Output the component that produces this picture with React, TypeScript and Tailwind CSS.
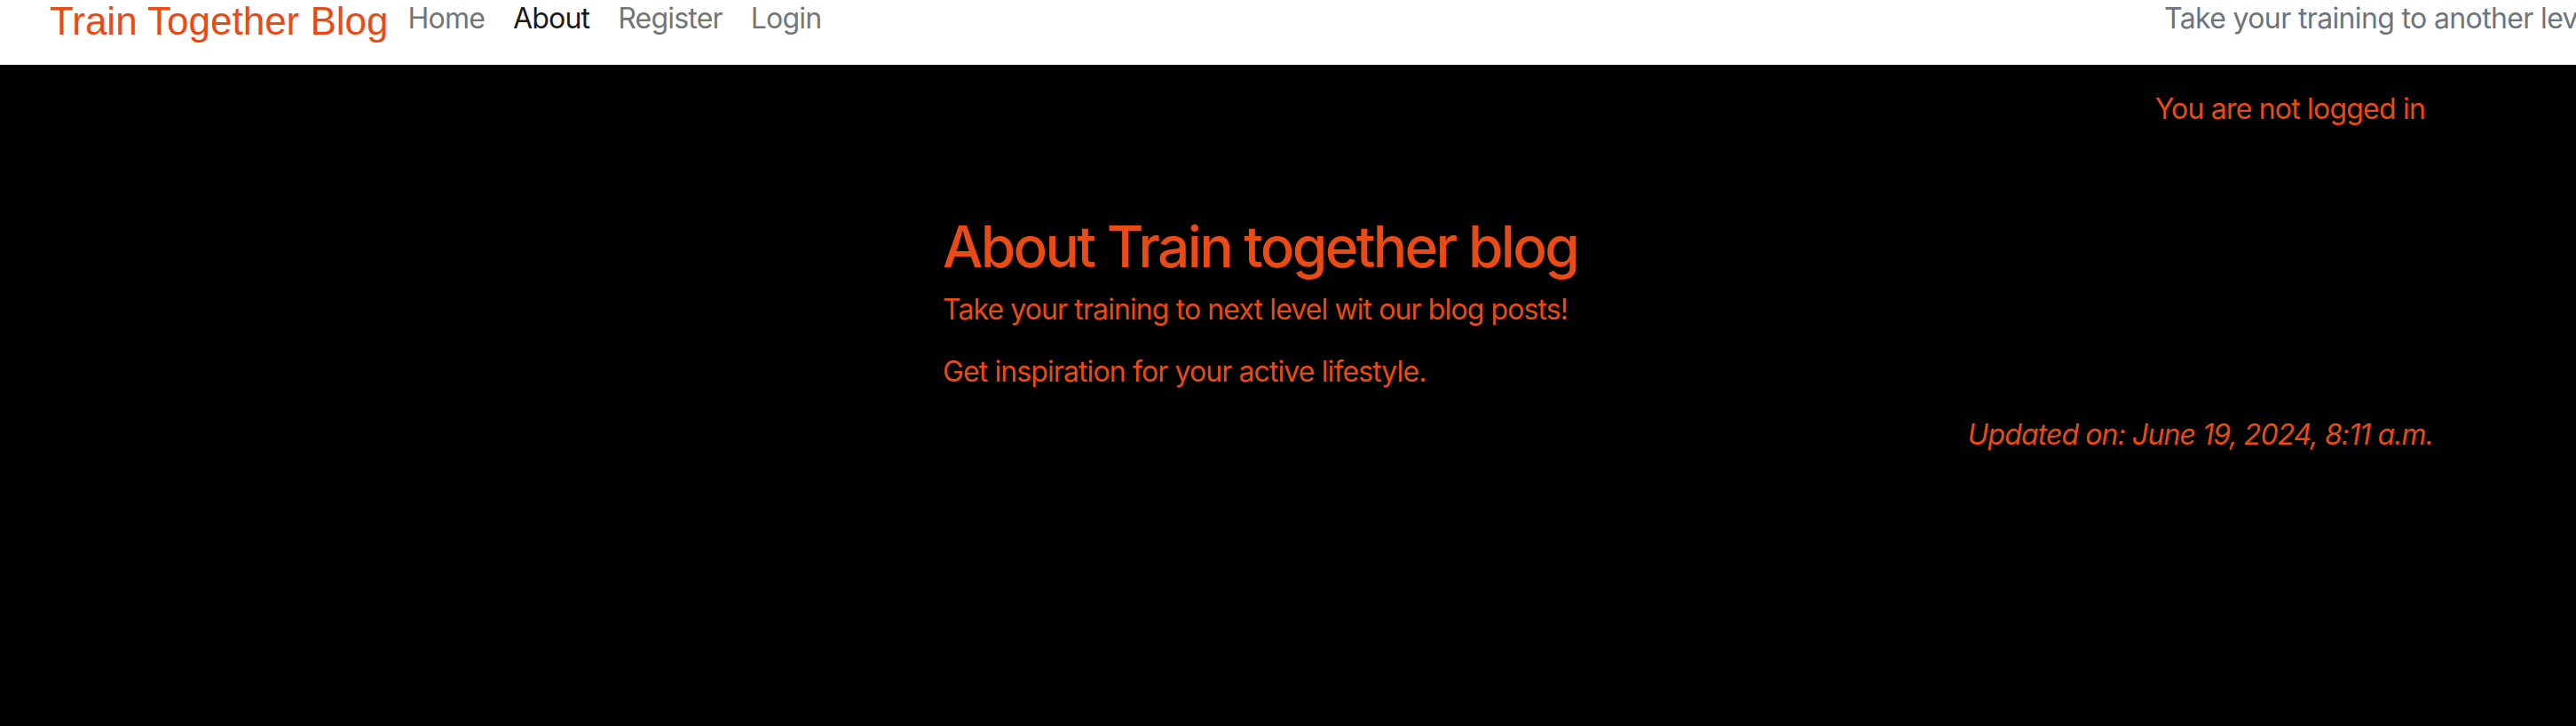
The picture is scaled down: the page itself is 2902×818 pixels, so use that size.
export default function App() {
  const links = [
    { label: "Home", active: false },
    { label: "About", active: true },
    { label: "Register", active: false },
    { label: "Login", active: false },
  ];

  return (
    <div className="min-h-screen w-full overflow-hidden bg-black font-['Inter','Noto_Sans',sans-serif]">
      {/* navbar */}
      <nav className="flex h-[73px] items-start bg-white">
        <div className="flex w-[2438px] shrink-0 items-start">
          <a className="ml-[56px] block pt-[1px] font-['Liberation_Sans',Arial,sans-serif] text-[44px] leading-[45px] text-[#ea4a14]">
            Train Together Blog
          </a>
          <ul className="ml-[6px] flex items-start">
            {links.map((l) => (
              <li key={l.label}>
                <a
                  className={
                    "mt-[2px] block px-4 text-[32px] leading-[38px] tracking-[-0.025em] " +
                    (l.active ? "text-[#1a1a1a]" : "text-[#757575]")
                  }
                >
                  {l.label}
                </a>
              </li>
            ))}
          </ul>
        </div>
        <span className="mt-[2px] shrink-0 whitespace-nowrap text-[32px] leading-[38px] tracking-[-0.02em] text-[#6c757d]">
          Take your training to another level
        </span>
      </nav>

      {/* main */}
      <main className="text-[#ea4a14]">
        <div className="flex justify-end pr-[170px] pt-[26px]">
          <p className="text-[32px] leading-[48px] tracking-[-0.025em]">You are not logged in</p>
        </div>

        <div className="flex">
          <div className="ml-[1062px] w-[1679px] shrink-0">
            <h2 className="mt-[92px] text-[64px] font-medium leading-[77px] tracking-[-0.042em]">
              About Train together blog
            </h2>
            <p className="mt-[9px] text-[32px] leading-[48px] tracking-[-0.028em]">
              Take your training to next level wit our blog posts!
            </p>
            <p className="mt-[22px] text-[32px] leading-[48px] tracking-[-0.028em]">
              Get inspiration for your active lifestyle.
            </p>
            <p className="mt-[23px] text-right text-[32px] italic leading-[48px] tracking-[-0.028em]">
              Updated on: June 19, 2024, 8:11 a.m.
            </p>
          </div>
        </div>
      </main>
    </div>
  );
}
